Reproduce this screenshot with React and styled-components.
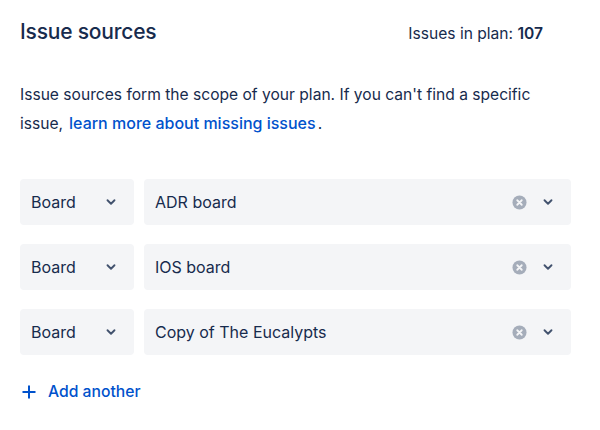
import React from "react";
import styled, { createGlobalStyle } from "styled-components";

const Global = createGlobalStyle`
  html, body { margin: 0; padding: 0; background: #fff; }
  body { font-family: Inter, "Noto Sans", "Liberation Sans", sans-serif; color: #172B4D; }
`;

const Page = styled.div`
  width: 600px;
  height: 430px;
  box-sizing: border-box;
  padding: 18px 29px 0 20px;
  display: flex;
  flex-direction: column;
`;

const Header = styled.div`
  display: flex;
  justify-content: space-between;
  align-items: baseline;
  padding-right: 28px;
`;

const Title = styled.h2`
  margin: 0;
  font-size: 21px;
  font-weight: 500;
  line-height: 28px;
  color: #172B4D;
  letter-spacing: -0.2px;
`;

const Count = styled.div`
  font-size: 15.6px;
  color: #172B4D;
  & b { font-weight: 600; }
`;

const Para = styled.p`
  margin: 34px 0 0;
  font-size: 15.6px;
  line-height: 29px;
  color: #172B4D;
`;

const Link = styled.a`
  color: #0052CC;
  text-decoration: none;
  font-weight: 500;
  font-size: 16px;
  margin: 0 2px 0 6px;
`;

const Rows = styled.div`
  display: flex;
  flex-direction: column;
  gap: 19px;
  margin-top: 41px;
`;

const Row = styled.div`
  display: flex;
  gap: 10px;
`;

const Field = styled.div`
  height: 46px;
  box-sizing: border-box;
  background: #F4F5F7;
  border-radius: 4px;
  display: flex;
  align-items: center;
  padding: ${(p) => (p.$type ? "0 16px 0 11px" : "0 16px 0 11px")};
  width: ${(p) => (p.$type ? "114px" : "auto")};
  flex: ${(p) => (p.$type ? "none" : "1")};
  font-size: 16px;
  color: #172B4D;
`;

const Value = styled.span`
  flex: 1;
`;

const Icons = styled.div`
  display: flex;
  align-items: center;
  gap: 14px;
`;

const Add = styled.button`
  margin-top: 27px;
  align-self: flex-start;
  border: 0;
  background: none;
  padding: 0 0 0 1px;
  display: flex;
  align-items: center;
  gap: 11px;
  font-family: inherit;
  font-size: 15.7px;
  font-weight: 500;
  color: #0052CC;
`;

const Chevron = () => (
  <svg width="14" height="14" viewBox="0 0 24 24">
    <path d="M6 9l6 6 6-6" fill="none" stroke="#42526E" strokeWidth="3.2" strokeLinecap="round" strokeLinejoin="round" />
  </svg>
);

const Clear = () => (
  <svg width="15" height="15" viewBox="0 0 16 16">
    <circle cx="8" cy="8" r="7.5" fill="#A5ADBA" />
    <path d="M5.6 5.6l4.8 4.8M10.4 5.6l-4.8 4.8" stroke="#F4F5F7" strokeWidth="1.9" strokeLinecap="round" />
  </svg>
);

const Plus = () => (
  <svg width="16" height="16" viewBox="0 0 16 16">
    <path d="M8 1.5v13M1.5 8h13" stroke="#0052CC" strokeWidth="2" />
  </svg>
);

const sources = ["ADR board", "IOS board", "Copy of The Eucalypts"];

export default function App() {
  return (
    <>
      <Global />
      <Page>
        <Header>
          <Title>Issue sources</Title>
          <Count>
            Issues in plan: <b>107</b>
          </Count>
        </Header>
        <Para>
          Issue sources form the scope of your plan. If you can't find a specific issue,
          <Link href="#">learn more about missing issues</Link>.
        </Para>
        <Rows>
          {sources.map((s) => (
            <Row key={s}>
              <Field $type>
                <Value>Board</Value>
                <Chevron />
              </Field>
              <Field>
                <Value>{s}</Value>
                <Icons>
                  <Clear />
                  <Chevron />
                </Icons>
              </Field>
            </Row>
          ))}
        </Rows>
        <Add>
          <Plus />
          Add another
        </Add>
      </Page>
    </>
  );
}
